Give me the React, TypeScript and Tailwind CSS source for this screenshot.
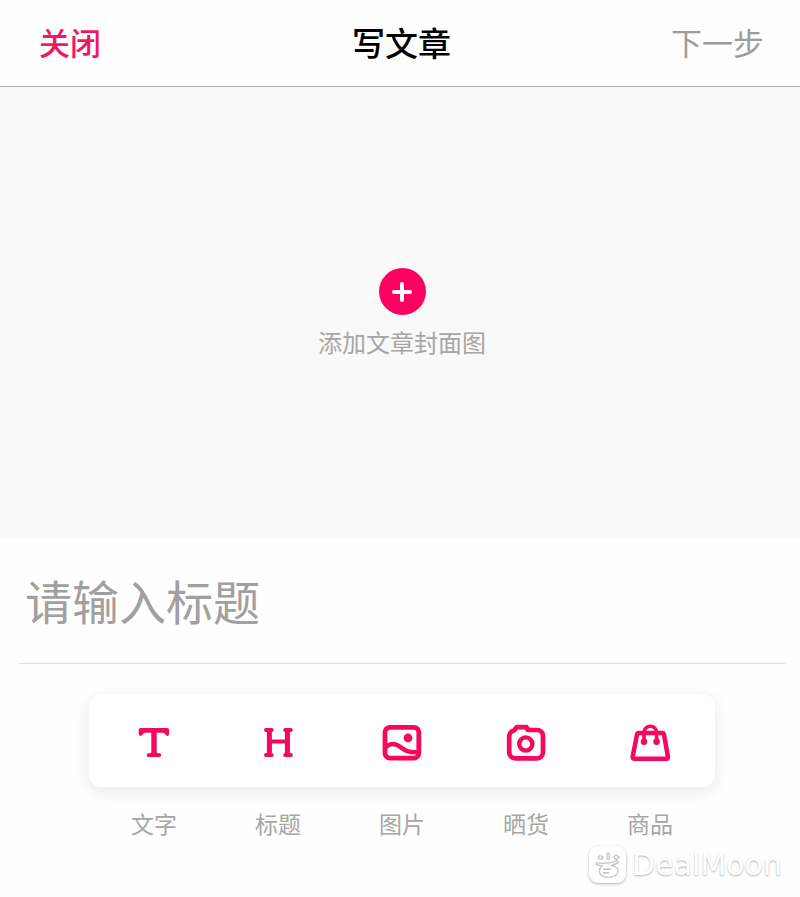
import { useState, type ReactNode } from "react";

interface Tool {
  id: string;
  label: string;
  icon: ReactNode;
}

const tools: Tool[] = [
  {
    id: "text",
    label: "文字",
    icon: (
      <path
        d="M6.6 4.9H33.2Q35.1 4.9 35.1 6.8V10.6Q35.1 12.9 33.3 12.9Q31.9 12.9 31.2 11.2Q30.6 9.7 29 9.7H22.7V29.4Q23.4 30.1 25.4 30.2A1.9 1.9 0 0 1 25.4 34H14.6A1.9 1.9 0 0 1 14.6 30.2Q16.6 30.1 17.3 29.4V9.7H11Q9.4 9.7 8.8 11.2Q8.1 12.9 6.7 12.9Q4.7 12.9 4.7 10.6V6.8Q4.7 4.9 6.6 4.9Z"
        fill="currentColor"
        stroke="none"
      />
    ),
  },
  {
    id: "heading",
    label: "标题",
    icon: (
      <>
        <path d="M11.4 8V31M29.4 8V31" strokeWidth="5" />
        <path d="M8 6.9H13.6M27.2 6.9H32.8M8 32H13.6M27.2 32H32.8M12 18.4H29" strokeWidth="4" />
      </>
    ),
  },
  {
    id: "image",
    label: "图片",
    icon: (
      <>
        <rect x="3" y="4.3" width="33.8" height="30.8" rx="5" strokeWidth="4.8" />
        <path d="M4 24C9 19.5 14 20.5 19 24.5C24 28.5 29 30 36 29" strokeWidth="4.4" />
        <circle cx="26" cy="15" r="4.4" fill="currentColor" stroke="none" />
      </>
    ),
  },
  {
    id: "show",
    label: "晒货",
    icon: (
      <>
        <path
          d="M21.8 7H31a6 6 0 0 1 6 6V29.3a6 6 0 0 1-6 6H9.2a6 6 0 0 1-6-6V13.4a6 6 0 0 1 5-6L10.6 4.2H20.5Z"
          strokeWidth="4.7"
        />
        <circle cx="19.8" cy="21" r="6.6" strokeWidth="4.4" />
      </>
    ),
  },
  {
    id: "product",
    label: "商品",
    icon: (
      <>
        <path d="M9 10H32a2 2 0 0 1 2 1.6L38 34a1.5 1.5 0 0 1-1.5 1.8H4A1.5 1.5 0 0 1 2.6 34L7 11.6A2 2 0 0 1 9 10Z" strokeWidth="4.5" />
        <path d="M14 18V9.5a6.3 6.3 0 0 1 12.6 0V18" strokeWidth="3.6" />
        <circle cx="14" cy="18.8" r="3.3" fill="currentColor" stroke="none" />
        <circle cx="26.6" cy="18.8" r="3.3" fill="currentColor" stroke="none" />
      </>
    ),
  },
];

function Header() {
  return (
    <header className="grid h-[87px] grid-cols-3 items-center border-b border-[#b3b3b3] pr-[36px] pb-0.5 pl-[39px] text-[31px] leading-[40px]">
      <button type="button" className="justify-self-start font-medium text-[#f0185f]">
        关闭
      </button>
      <h1 className="justify-self-center text-[33px] font-medium text-black">写文章</h1>
      <button type="button" className="justify-self-end text-[#9c9c9c]">
        下一步
      </button>
    </header>
  );
}

function CoverPicker() {
  return (
    <button
      type="button"
      className="flex h-[452px] w-full flex-col items-center justify-center gap-[11px] bg-[#f9f9f9] pl-1 text-2xl text-[#a6a6a6]"
    >
      <span className="flex size-[47px] items-center justify-center rounded-full bg-[#ff0062] text-white">
        <svg viewBox="0 0 20 20" className="size-5" fill="none" stroke="currentColor" strokeWidth="4" strokeLinecap="round" aria-hidden="true">
          <path d="M10 2V18M2 10H18" />
        </svg>
      </span>
      <span>添加文章封面图</span>
    </button>
  );
}

function Toolbar() {
  return (
    <div className="mx-[70px] mt-[30px]">
      <div className="grid h-[93px] grid-cols-5 rounded-xl bg-white px-[3px] shadow-[0_4px_14px_rgba(30,40,80,0.1)]">
        {tools.map((tool) => (
          <button
            key={tool.id}
            type="button"
            aria-labelledby={`tool-${tool.id}`}
            className="flex justify-center pt-[29px] text-[#f7085f]"
          >
            <svg
              viewBox="0 0 40 40"
              className="size-10 overflow-visible"
              fill="none"
              stroke="currentColor"
              strokeLinecap="round"
              strokeLinejoin="round"
              aria-hidden="true"
            >
              {tool.icon}
            </svg>
          </button>
        ))}
      </div>
      <div className="mt-[22px] grid grid-cols-5 px-[3px] text-center text-[23px] leading-[28px] text-[#a6a6a6]">
        {tools.map((tool) => (
          <span key={tool.id} id={`tool-${tool.id}`}>
            {tool.label}
          </span>
        ))}
      </div>
    </div>
  );
}

function Brand() {
  return (
    <footer className="mt-[9px] flex items-center justify-end gap-1.5 pr-[18px]">
      <span className="flex size-[37px] items-center justify-center rounded-[9px] bg-white shadow-[0_1px_3px_rgba(0,0,0,0.3)]">
        <svg
          viewBox="0 0 28 28"
          className="size-7"
          fill="none"
          stroke="#c6c6c6"
          strokeWidth="1.3"
          strokeLinecap="round"
          strokeLinejoin="round"
          aria-hidden="true"
        >
          <path d="M13 2.5H15.2V8H13ZM5.5 4.5L9 5.6L8.2 8.4L4.4 7.4ZM19.5 6L22 4L25.4 6.4L22 8.6Z" />
          <path d="M2.5 11.6C9 12.8 17 12 23 9.8L24.5 11.4C22 13 19.4 14 17 14.4C22 15.2 24.2 17.3 24 20C23.6 24.4 19.4 26.4 14 26.4C8.6 26.4 5.2 23.7 5.4 19.7C5.4 17.5 6.6 16 8.2 14.7C6 14.6 3.8 14.2 2.2 13.4Z" />
          <path d="M10 18.2H16M9.5 21.8H14.5" strokeWidth="1.8" />
        </svg>
      </span>
      <span className="font-['DejaVu_Sans',sans-serif] text-[30px] leading-[37px] text-white [text-shadow:0_1px_2px_rgba(0,0,0,0.3)]">
        DealMoon
      </span>
    </footer>
  );
}

export default function App() {
  const [title, setTitle] = useState("");

  return (
    <main className="min-h-screen bg-[#fefefe] font-['Noto_Sans_CJK_SC',sans-serif]">
      <Header />
      <CoverPicker />
      <section className="pr-[15px] pl-[19px]">
        <input
          type="text"
          aria-label="标题"
          placeholder="请输入标题"
          value={title}
          onChange={(e) => setTitle(e.target.value)}
          className="h-[125px] w-full border-b border-[#dedede] bg-transparent px-1.5 pb-1 text-[47px] text-[#333333] outline-none placeholder:text-[#a0a0a0]"
        />
        <Toolbar />
      </section>
      <Brand />
    </main>
  );
}
